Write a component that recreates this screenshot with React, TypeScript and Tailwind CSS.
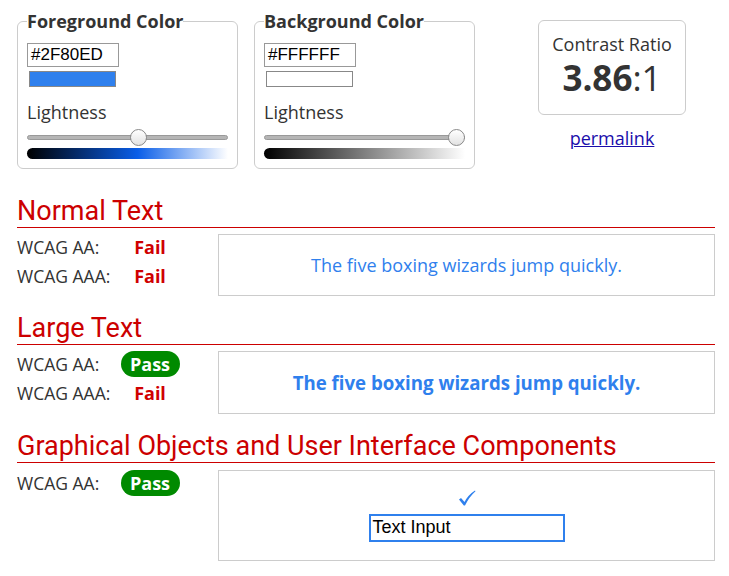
import React from 'react';

type ColorBoxProps = {
  legend: string;
  hex: string;
  swatch: string;
  pct: number;
  gradient: string;
};

function ColorBox({ legend, hex, swatch, pct, gradient }: ColorBoxProps) {
  return (
    <fieldset className="w-[221px] mt-[9px] border border-[#cccccc] rounded-[6px] pl-[9px] pr-[9px] pt-[10px] pb-[9px]">
      <legend className="text-[18px] leading-[24px] font-bold text-[#333333]">{legend}</legend>
      <div className="w-[92px] h-[24px] border border-[#999999] px-[3px] flex items-center font-['Liberation_Sans',sans-serif] text-[17px] text-black">
        {hex}
      </div>
      <div className={`ml-[2px] mt-[4px] w-[87px] h-[16px] border border-[#888888] ${swatch}`} />
      <div className="mt-[13px] text-[18px] leading-[24px] text-[#333333]">Lightness</div>
      {/* slider */}
      <div className="relative mt-[5px] h-[17px] flex items-center">
        <div className="w-full h-[5px] rounded-full bg-[#b5b5b5] border border-[#999999]" />
        <div
          className="absolute top-0 w-[17px] h-[17px] rounded-full border border-[#8a8a8a] bg-[linear-gradient(#ffffff,#e2e2e2)]"
          style={{ left: `calc(${pct}% - ${(pct / 100) * 17}px)` }}
        />
      </div>
      <div className={`mt-[2px] h-[11px] rounded-l-full ${gradient}`} />
    </fieldset>
  );
}

function Status({ pass }: { pass: boolean }) {
  return pass ? (
    <span className="inline-flex items-center justify-center w-[59px] h-[26px] rounded-full bg-[#008a00] text-white font-bold text-[18px]">
      Pass
    </span>
  ) : (
    <span className="text-[#d00000] font-bold text-[18px]">Fail</span>
  );
}

function Results({ rows }: { rows: { label: string; pass: boolean }[] }) {
  return (
    <div className="w-[201px] shrink-0 flex flex-col gap-[3px]">
      {rows.map((r) => (
        <div key={r.label} className="h-[26px] flex items-center">
          <span className="w-[103px] text-[17.5px] text-[#333333]">{r.label}</span>
          <span className="w-[60px] flex justify-center">
            <Status pass={r.pass} />
          </span>
        </div>
      ))}
    </div>
  );
}

function Heading({ children, className }: { children: React.ReactNode; className: string }) {
  return (
    <h2 className={`font-['Roboto',sans-serif] text-[27px] leading-[30px] pb-px text-[#cc0000] border-b border-[#cc0000] ${className}`}>
      {children}
    </h2>
  );
}

export default function App() {
  return (
    <div className="w-[729px] h-[576px] bg-white pl-[17px] pr-[14px] font-['Open_Sans',sans-serif] text-[#333333] overflow-hidden">
      {/* Top controls */}
      <div className="flex items-start">
        <ColorBox
          legend="Foreground Color"
          hex="#2F80ED"
          swatch="bg-[#2F80ED]"
          pct={56}
          gradient="bg-[linear-gradient(to_right,#000000,#0a5ee8_55%,#ffffff)]"
        />
        <div className="ml-[16px]">
          <ColorBox
            legend="Background Color"
            hex="#FFFFFF"
            swatch="bg-white"
            pct={100}
            gradient="bg-[linear-gradient(to_right,#000000,#808080_50%,#ffffff)]"
          />
        </div>
        <div className="ml-[63px] mt-[20px] flex flex-col items-center">
          <div className="w-[148px] h-[95px] border border-[#cccccc] rounded-[6px] pt-[11px] flex flex-col items-center">
            <div className="text-[18px] leading-[24px] text-[#333333]">Contrast Ratio</div>
            <div className="text-[35px] leading-[44px] text-[#333333]">
              <b>3.86</b>:1
            </div>
          </div>
          <a href="#" className="mt-[11px] text-[18px] leading-[24px] text-[#1a0dab] underline">
            permalink
          </a>
        </div>
      </div>

      {/* Normal Text */}
      <Heading className="mt-[27px]">Normal Text</Heading>
      <div className="flex mt-[6px]">
        <Results rows={[{ label: 'WCAG AA:', pass: false }, { label: 'WCAG AAA:', pass: false }]} />
        <div className="flex-1 h-[62px] border border-[#cccccc] flex items-center justify-center text-[18px] text-[#2F80ED]">
          The five boxing wizards jump quickly.
        </div>
      </div>

      {/* Large Text */}
      <Heading className="mt-[17px]">Large Text</Heading>
      <div className="flex mt-[6px]">
        <Results rows={[{ label: 'WCAG AA:', pass: true }, { label: 'WCAG AAA:', pass: false }]} />
        <div className="flex-1 h-[63px] border border-[#cccccc] flex items-center justify-center text-[18.66px] font-bold text-[#2F80ED]">
          The five boxing wizards jump quickly.
        </div>
      </div>

      {/* Graphical Objects */}
      <Heading className="mt-[17px]">Graphical Objects and User Interface Components</Heading>
      <div className="flex mt-[7px]">
        <Results rows={[{ label: 'WCAG AA:', pass: true }]} />
        <div className="flex-1 h-[91px] border border-[#cccccc] flex flex-col items-center justify-center">
          <svg width="18" height="16" viewBox="0 0 18 16" className="mb-[8px]">
            <path d="M1 9.5 L3 8 L6.5 12 Q10 5 17 0.5 L17.5 1.2 Q11 7 7 15.5 L5.8 15.5 Z" fill="#2F80ED" />
          </svg>
          <div className="w-[196px] h-[28px] border-2 border-[#2F80ED] px-[2px] flex items-center font-['Liberation_Sans',sans-serif] text-[18px] text-black">
            Text Input
          </div>
        </div>
      </div>
    </div>
  );
}
